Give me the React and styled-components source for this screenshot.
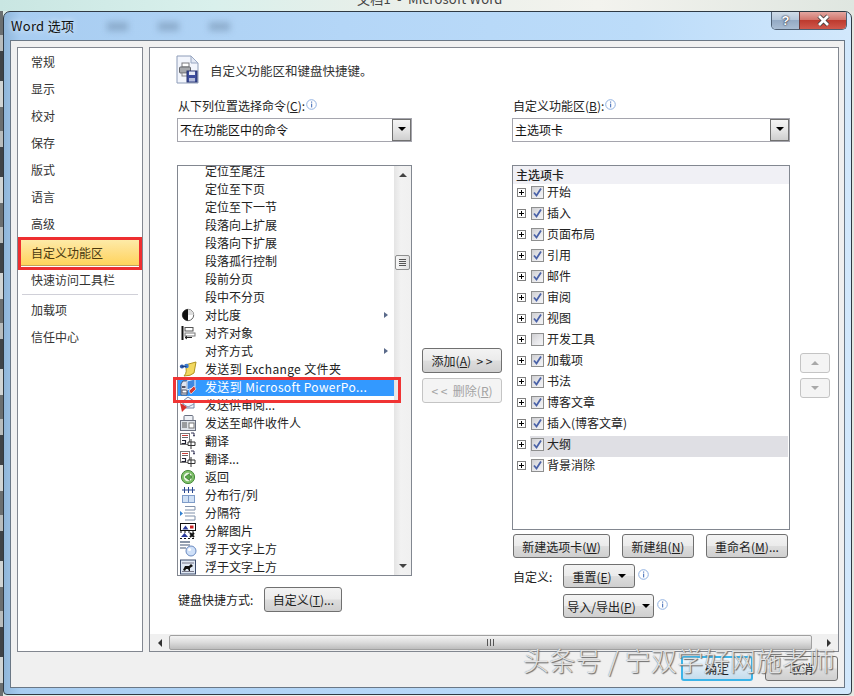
import React from 'react';
import styled, { createGlobalStyle } from 'styled-components';

const Global = createGlobalStyle`
  html, body { margin: 0; padding: 0; background: #e8eeee; }
  * { box-sizing: border-box; }
  body { font-family: "Noto Sans CJK SC", "Liberation Sans", sans-serif; font-size: 12px; color: #1e1e1e; }
`;

const FONT = `"Noto Sans CJK SC", "Liberation Sans", sans-serif`;

const Screen = styled.div`
  position: relative; width: 854px; height: 696px; overflow: hidden;
  display: flex; flex-direction: column;
  background: linear-gradient(90deg, #dfeee9, #eef3ef 40%, #e4e7e2);
`;
const TopStrip = styled.div`
  height: 11px; flex: none; overflow: hidden; padding-left: 357px;
  background: linear-gradient(90deg, #c9e6e2 0, #d9f0ec 25%, #e9efe9 45%, #f3f3ee 70%, #dfe6e0 100%);
`;
const Caption = styled.div`
  margin-top: -10px; font-size: 13px; line-height: 18px; color: #444; letter-spacing: .2px; white-space: pre;
`;
const Stage = styled.div`flex: 1; display: flex; min-height: 0;`;
const LeftEdge = styled.div`
  width: 3px; flex: none;
  background: repeating-linear-gradient(180deg, #6b6f70 0 24px, #b8bcbc 24px 40px, #3f4347 40px 70px, #d0d4d4 70px 96px);
`;
const Win = styled.div`
  width: 849px; height: 684px; flex: none; border: 1px solid #2f3a44; border-radius: 7px 7px 4px 4px;
  padding: 0 6px 6px 6px; display: flex; flex-direction: column; overflow: hidden;
  background: linear-gradient(90deg, #8fb6da 0, #a8cdf1 2%, #b4d6f7 40%, #bcdcf9 75%, #d2e8fc 100%);
`;
const TitleBar = styled.div`height: 28px; flex: none; display: flex; align-items: flex-start; position: relative;`;
const TitleText = styled.div`
  margin: 5px 0 0 1px; font-size: 13px; line-height: 18px; color: #111; letter-spacing: .3px;
  text-shadow: 0 0 6px rgba(255,255,255,.9);
`;
const Blobs = styled.div`display: flex; gap: 30px; margin: 10px 0 0 33px;`;
const Blob = styled.div`width: 21px; height: 9px; background: rgba(90,115,145,.38); filter: blur(3px);`;
const Caps = styled.div`
  margin-left: auto; margin-right: -2px; margin-top: -1px; display: flex; height: 19px;
  border: 1px solid #4d5f72; border-top: none; border-radius: 0 0 5px 5px; overflow: hidden;
`;
const HelpCap = styled.div`
  width: 27px; display: flex; align-items: center; justify-content: center;
  font: bold 13px "Liberation Sans", sans-serif; color: #fff; text-shadow: 0 0 2px #223, 0 0 1px #223;
  background: linear-gradient(180deg, #d3dfea, #b5c7da 48%, #93aac4 52%, #a9bdd3);
`;
const CloseCap = styled.div`
  width: 47px; display: flex; align-items: center; justify-content: center; border-left: 1px solid #6e3a3a;
  background: linear-gradient(180deg, #e5aca6, #d2776e 48%, #bd3a2e 52%, #d0584c);
`;
const Client = styled.div`
  flex: 1; min-height: 0; border: 1px solid #6a7785; background: #f0f0f0;
  padding: 6px 6px 0 6px; display: flex; flex-direction: column;
`;
const Main = styled.div`height: 605px; flex: none; display: flex; gap: 6px;`;
const Nav = styled.div`
  width: 126px; flex: none; background: #fff; border: 1px solid #828790;
`;
const NavItem = styled.div`
  position: relative; height: ${p => p.$tall ? 29 : 27}px; display: flex; align-items: center; padding-left: 13px;
  font-size: 12px; color: #333;
  ${p => p.$active && `
    padding-top: 2px; color: #4a3a10;
    background: linear-gradient(180deg, #fdeeb0, #fee08a 45%, #ffd35a);
    box-shadow: inset 0 0 0 1px #c2a25a;
    &::after { content: ''; position: absolute; left: 0; right: 0; top: 0; bottom: -4px; border: 3px solid #ee2e30; }
  `}
`;
const NavSep = styled.div`height: 1px; background: #d0d0d8; margin: 1px 4px 1px 4px;`;

const Panel = styled.div`
  width: 690px; flex: none; background: #fff; border: 1px solid #828790; display: flex; flex-direction: column;
`;
const PanelBody = styled.div`flex: 1; min-height: 0; padding-left: 27px;`;
const HeadRow = styled.div`
  height: 49px; display: flex; align-items: flex-start; padding: 7px 0 0 0; margin-left: -1px;
`;
const HeadText = styled.div`
  margin: 7px 0 0 11px; font-size: 12.5px; line-height: 18px; color: #333;
`;
const Columns = styled.div`display: flex; align-items: flex-start;`;
const LeftCol = styled.div`width: 235px; flex: none; display: flex; flex-direction: column;`;
const MidCol = styled.div`width: 100px; flex: none; display: flex; flex-direction: column; align-items: center; padding-top: 251px; gap: 5px;`;
const RightCol = styled.div`width: 278px; flex: none; display: flex; flex-direction: column;`;
const SideCol = styled.div`margin-left: 10px; padding-top: 256px; display: flex; flex-direction: column; gap: 5px;`;
const Label = styled.div`
  height: 18px; display: flex; align-items: center; gap: 1px; font-size: 12px; line-height: 18px; color: #222;
  padding-left: 1px;
`;
const Ak = styled.span`text-decoration: underline; text-underline-offset: 1px;`;
const Select = styled.div`
  margin-top: 3px; height: 24px; border: 1px solid #a5a5ad; background: #fff; display: flex; align-items: center;
  justify-content: space-between; font-size: 12px; padding-left: 2px; color: #111;
`;
const SelectText = styled.span`margin-top: -2px;`;
const SelectBtn = styled.div`
  width: 19px; height: 22px; border: 1px solid #707070; background: linear-gradient(180deg, #f4f4f4, #e6e6e6 50%, #cfcfcf);
  display: flex; align-items: center; justify-content: center; padding-bottom: 3px;
`;
const Caret = styled.i`
  width: 0; height: 0; border-left: 4px solid transparent; border-right: 4px solid transparent; border-top: 4px solid ${p => p.$c || '#000'};
  ${p => p.$gap && `margin-left: ${p.$gap}px;`}
`;
const ListBox = styled.div`
  position: relative; margin-top: 23px; height: 411px; border: 1px solid #828790; display: flex; background: #fff;
`;
const RowsClip = styled.div`flex: 1; min-width: 0; overflow: hidden;`;
const Rows = styled.div`margin-top: -4px;`;
const CmdRow = styled.div`
  height: 18px; display: flex; align-items: center; font-size: 12px; color: ${p => p.$sel ? '#fff' : '#222'};
  background: ${p => p.$sel ? '#3399ff' : 'transparent'}; white-space: pre;
`;
const CmdIcon = styled.div`width: 20px; height: 18px; flex: none; display: flex; align-items: center; justify-content: center; margin-right: 7px; margin-left: 0;`;
const CmdText = styled.span`flex: 1; margin-top: -2px; letter-spacing: ${p => p.$wide ? '.36px' : '0'};`;
const SubArrow = styled.i`
  width: 0; height: 0; margin-right: 6px; border-top: 3.5px solid transparent; border-bottom: 3.5px solid transparent; border-left: 4px solid #5a6a8a;
`;
const VScroll = styled.div`
  width: 17px; flex: none; background: linear-gradient(90deg, #e4e4e4, #f2f2f2 40%, #f0f0f0); display: flex; flex-direction: column; align-items: center;
`;
const ArrowUp = styled.i`
  margin-top: 7px; width: 0; height: 0; border-left: 4px solid transparent; border-right: 4px solid transparent; border-bottom: 4px solid ${p => p.$c || '#444'};
`;
const ArrowDown = styled.i`
  margin-top: auto; margin-bottom: 7px; width: 0; height: 0; border-left: 4px solid transparent; border-right: 4px solid transparent; border-top: 4px solid ${p => p.$c || '#444'};
`;
const Thumb = styled.div`
  margin-top: 78px; width: 15px; height: 15px; border: 1px solid #8e8f8f; border-radius: 2px;
  background: linear-gradient(90deg, #f6f6f6, #e2e2e2); display: flex; flex-direction: column; align-items: center; justify-content: center; gap: 1px;
`;
const Grip = styled.i`width: 7px; height: 1px; background: #555;`;
const ShortcutRow = styled.div`margin-top: 11px; display: flex; align-items: center; gap: 11px; font-size: 12px; padding-left: 1px; color: #222;`;
const Btn = styled.div`
  height: ${p => p.$h || 24}px; width: ${p => p.$w}px; flex: none; display: flex; align-items: center; justify-content: center;
  border: 1px solid ${p => p.$off ? '#c4c4c4' : '#707070'}; border-radius: 3px; font-size: 12px; white-space: pre;
  color: ${p => p.$off ? '#a3a3a3' : '#222'};
  background: ${p => p.$off ? '#f4f4f4' : 'linear-gradient(180deg, #f3f3f3, #ebebeb 48%, #dddddd 52%, #cfcfcf)'};
`;
const TreeBox = styled.div`height: 365px; margin-top: 23px; border: 1px solid #828790; background: #fff; overflow: hidden;`;
const TreeHead = styled.div`height: 18px; background: #f0f0f5; padding-left: 3px; font-size: 12px; line-height: 17px; color: #222; font-weight: 500;`;
const TreeRow = styled.div`height: 21px; display: flex;`;
const Expander = styled.div`
  position: relative; flex: none; width: 9px; height: 9px; margin: 4px 4px 0 4px; border: 1px solid #808080; background: #fff;
  &::before { content: ''; position: absolute; left: 1px; right: 1px; top: 3px; height: 1px; background: #000; }
  &::after { content: ''; position: absolute; top: 1px; bottom: 1px; left: 3px; width: 1px; background: #000; }
`;
const TreeLabel = styled.div`
  flex: 1; margin-right: 1px; display: flex; align-items: flex-start; gap: 3px; padding-left: 1px; font-size: 12px; line-height: 16px; color: #222;
  background: ${p => p.$sel ? '#dfdfe4' : 'transparent'};
`;
const Check = styled.div`
  width: 13px; height: 13px; flex: none; margin-top: 2px; border: 1px solid #8e8f8f; display: flex; align-items: center; justify-content: center;
  background: linear-gradient(135deg, #cfcfd2, #e9e9ec 60%, #f4f4f6);
`;
const BtnRow = styled.div`margin-top: ${p => p.$mt}px; display: flex; align-items: center;`;
const Spacer = styled.div`width: ${p => p.$w}px; flex: none; font-size: 12px; color: #222; padding-left: 1px;`;
const HScroll = styled.div`
  height: 17px; flex: none; display: flex; align-items: center; background: #f0f0f0; margin-bottom: 0;
`;
const HArrow = styled.div`width: 19px; flex: none; display: flex; justify-content: center;`;
const LeftTri = styled.i`width: 0; height: 0; border-top: 4px solid transparent; border-bottom: 4px solid transparent; border-right: 4px solid #333;`;
const RightTri = styled.i`width: 0; height: 0; border-top: 4px solid transparent; border-bottom: 4px solid transparent; border-left: 4px solid #333;`;
const HThumb = styled.div`
  width: 643px; height: 15px; flex: none; border: 1px solid #a0a0a0; border-radius: 2px; display: flex; align-items: center; justify-content: center; gap: 2px;
  background: linear-gradient(180deg, #f3f3f3, #dcdcdc 50%, #bdbdbd);
`;
const VGrip = styled.i`width: 1px; height: 7px; background: #555;`;
const Footer = styled.div`flex: 1; display: flex; justify-content: flex-end; gap: 12px; padding-top: 4px; padding-right: 0; align-items: flex-start;`;
const DefaultBtn = styled(Btn)`
  border: 2px solid #3cb4e8; color: #222; background: linear-gradient(180deg, #f0f8fd, #dbeaf5 50%, #c5dcec);
`;
const Watermark = styled.div`
  position: absolute; left: 523px; top: 642px; font-family: ${FONT}; font-size: 26px; line-height: 36px; white-space: pre;
  color: rgba(255,255,255,.78); font-weight: 300; letter-spacing: .3px;
  text-shadow: 1px 1px 1px #666, 0 0 1px #777;
`;

const RedBox = styled.div`
  position: absolute; left: -5px; top: 211px; width: 228px; height: 26px; border: 3px solid #f03434; pointer-events: none;
`;

const Info = ({ m = 0 }) => (
  <svg width="11" height="11" viewBox="0 0 11 11" style={{ flex: 'none', marginLeft: m, marginBottom: 3 }}>
    <circle cx="5.5" cy="5.5" r="4.8" fill="#fff" stroke="#8fb0e0" />
    <rect x="5" y="2.5" width="1.2" height="1.2" fill="#5a7fc0" />
    <rect x="5" y="4.6" width="1.2" height="3.8" fill="#5a7fc0" />
  </svg>
);

const X = () => (
  <svg width="15" height="13" viewBox="0 0 15 13">
    <path d="M3 2 L12 11 M12 2 L3 11" stroke="#3a3a3a" strokeWidth="4.4" />
    <path d="M3 2 L12 11 M12 2 L3 11" stroke="#fff" strokeWidth="2.8" />
  </svg>
);

const Tick = () => (
  <svg width="11" height="11" viewBox="0 0 11 11">
    <path d="M2 5.5 L4.5 8.5 L9 1.5" fill="none" stroke="#4a62a8" strokeWidth="1.8" />
  </svg>
);

const HeadIcon = () => (
  <svg width="23" height="30" viewBox="0 0 23 30" style={{ flex: 'none' }}>
    <path d="M1 1 H15 L22 8 V28 H1 Z" fill="#f2f5fc" stroke="#8d9cb8" />
    <path d="M15 1 V8 H22 Z" fill="#e2e8f4" stroke="#9aa8c2" />
    <rect x="6" y="8" width="7" height="4" fill="#fff" stroke="#7a7a7e" />
    <rect x="3.5" y="12" width="11" height="6" rx="1" fill="#a6a8ac" stroke="#66686c" />
    <rect x="6" y="18" width="6" height="3" fill="#f4f4f4" stroke="#8a8a8e" />
    <rect x="11" y="16" width="10" height="11" fill="#3c4c9c" stroke="#28346e" />
    <rect x="13" y="16.5" width="6" height="3.5" fill="#e6eaf6" />
    <rect x="13" y="23" width="6" height="3.5" fill="#b4bcdc" />
  </svg>
);

const Ico = ({ children }) => <svg width="18" height="18" viewBox="0 0 18 18">{children}</svg>;
const TranslateIcon = () => (
  <Ico>
    <rect x="1.5" y="1.5" width="9" height="11" fill="#fff" stroke="#777" />
    <path d="M3 3.5 H9" stroke="#c9403a" /><path d="M3 5.5 H9" stroke="#666" />
    <path d="M2.5 11.5 H6.5 V8.5 H3" fill="none" stroke="#223" strokeWidth="1.2" />
    <path d="M12 7 V17 M9 10 H16 V13.5 H9 Z" fill="#fff" stroke="#333" />
    <path d="M12 1 H15 V4" fill="none" stroke="#335" /><path d="M14 3 L16 3 L15 5 Z" fill="#335" />
  </Ico>
);
const icons = {
  contrast: <Ico><circle cx="9" cy="9" r="5.7" fill="#fff" stroke="#666" /><path d="M9 3.3 A5.7 5.7 0 0 0 9 14.7 Z" fill="#111" /><path d="M9 3.3 A5.7 5.7 0 0 1 14.7 9 L9 9 Z" fill="#ddd" /></Ico>,
  alignObj: <Ico><path d="M3.5 2 V16" stroke="#111" strokeWidth="2" /><rect x="6" y="3.5" width="8" height="3.5" fill="#fff" stroke="#555" /><rect x="6" y="9" width="10" height="3" fill="#fff" stroke="#777" /><path d="M6 13.5 H13 M6 13.5 L8 12 M6 13.5 L8 15" fill="none" stroke="#222" /></Ico>,
  exchange: <Ico><path d="M6 5 L17 2 L15 13 Q12 16 5 16 Q9 12 6 5 Z" fill="#f2d860" stroke="#b09420" /><circle cx="3" cy="6.5" r="2.1" fill="#2a58aa" /><circle cx="7.5" cy="6" r="2.3" fill="#3b7ad0" /><path d="M3 6.5 H7.5" stroke="#1c3c80" /></Ico>,
  ppt: <Ico><path d="M2 6 L4 3 H8 V17 H2 Z" fill="#dfe6f2" stroke="#4a5a78" /><rect x="3" y="8" width="3.5" height="2" fill="#556" /><rect x="3" y="12" width="5" height="3" fill="#fff" stroke="#556" /><path d="M8 3 L16 1 V9 L8 12 Z" fill="#3f88e0" stroke="#e8f2fc" /><path d="M10 13 L15 8 L17 11 L12 16 Z" fill="#d83a30" stroke="#fff" strokeWidth=".6" /></Ico>,
  review: <Ico><path d="M4 5 L9 1 L15 5 V12 H4 Z" fill="#f2f5fa" stroke="#7585a4" /><path d="M4 8 L9 11 L15 8" fill="none" stroke="#8494b2" /><path d="M1 7 L8 11 L5 14 L3 16 Z" fill="#d8302a" /></Ico>,
  mail: <Ico><rect x="5" y="1.5" width="9" height="6" rx="1" fill="#eef1f6" stroke="#6a7080" /><rect x="1.5" y="6.5" width="15" height="10" fill="#dfe3ea" stroke="#6a7080" /><path d="M3 9 H8 M3 11 H8 M3 13 H8" stroke="#555" /><rect x="10" y="9" width="5" height="5" fill="#fff" stroke="#777" /></Ico>,
  translate: <TranslateIcon />,
  back: <Ico><circle cx="9" cy="9" r="6.6" fill="#7cc067" stroke="#4a8a3e" /><circle cx="9" cy="9" r="4.2" fill="#eaf5e2" /><path d="M10.5 5.6 L6 9 L10.5 12.4 V10.3 H12.5 V7.7 H10.5 Z" fill="#5aa94a" stroke="#2c6a22" strokeWidth=".6" /></Ico>,
  table: <Ico><path d="M3 4 H16 M5.5 1 V7 M9.5 1 V7 M13.5 1 V7" stroke="#2a4890" /><rect x="3.5" y="9.5" width="6" height="7" fill="#cfe0f5" stroke="#7f9cc8" /><rect x="9.5" y="9.5" width="6" height="7" fill="#cfe0f5" stroke="#7f9cc8" /></Ico>,
  breaks: <Ico><path d="M1 7 L4 9.5 L1 12 Z" fill="#2f7fd0" /><path d="M6 2.5 H16 V6 H6" fill="#fff" stroke="#7f90aa" /><path d="M5 9 H16" stroke="#7f90aa" /><path d="M6 12 H16 V16 H6" fill="#fff" stroke="#7f90aa" /></Ico>,
  split: <Ico><rect x="1.5" y="1.5" width="15" height="7" fill="#fff" stroke="#111" /><path d="M3.5 7.5 L6.5 3.5 L9.5 7.5 Z" fill="#2a3a9a" /><rect x="11" y="3.5" width="3.5" height="3" fill="#c22" /><path d="M2 15 L5.5 11 L9 15 Z" fill="#2a3a9a" /><path d="M1 10 H17 M1 16.5 H17" stroke="#111" strokeDasharray="2 2" /><path d="M11 11 L15 15 M15 11 L11 15" stroke="#111" strokeWidth="2" /></Ico>,
  floatA: <Ico><rect x="1" y="1" width="10" height="2" fill="#8a96a8" /><rect x="1" y="4" width="10" height="2" fill="#a0aaba" /><rect x="1" y="7" width="6" height="2" fill="#a0aaba" /><circle cx="12" cy="11" r="5" fill="#cfe0f8" stroke="#6a8ac0" /><circle cx="10.5" cy="9.5" r="1.6" fill="#fff" /></Ico>,
  floatB: <Ico><rect x="1.5" y="2" width="15" height="14" fill="#dfe8f4" stroke="#3a4a6a" /><path d="M3 5 H15 M3 13.5 H15" stroke="#778" /><path d="M4 12 L6 8 H10 L12 6 L14 8 L11 10 V13 H10 L9 11 H7 L6 13 Z" fill="#111" /></Ico>,
};

const cmds = [
  ['定位至尾注'], ['定位至下页'], ['定位至下一节'], ['段落向上扩展'], ['段落向下扩展'], ['段落孤行控制'], ['段前分页'], ['段中不分页'],
  ['对比度', 'contrast', true], ['对齐对象', 'alignObj'], ['对齐方式', null, true], ['发送到 Exchange 文件夹', 'exchange'],
  ['发送到 Microsoft PowerPo...', 'ppt', false, true], ['发送供审阅...', 'review'], ['发送至邮件收件人', 'mail'], ['翻译', 'translate'], ['翻译...', 'translate'],
  ['返回', 'back'], ['分布行/列', 'table'], ['分隔符', 'breaks'], ['分解图片', 'split'], ['浮于文字上方', 'floatA'], ['浮于文字上方', 'floatB'],
];
const tabs = [
  ['开始', 1], ['插入', 1], ['页面布局', 1], ['引用', 1], ['邮件', 1], ['审阅', 1], ['视图', 1], ['开发工具', 0], ['加载项', 1], ['书法', 1], ['博客文章', 1], ['插入(博客文章)', 1], ['大纲', 1, true], ['背景消除', 1],
];
const navA = ['常规', '显示', '校对', '保存', '版式', '语言', '高级'];

export default function App() {
  return (
    <Screen>
      <Global />
      <TopStrip><Caption>文档1  -  Microsoft Word</Caption></TopStrip>
      <Stage>
        <LeftEdge />
        <Win>
          <TitleBar>
            <TitleText>Word 选项</TitleText>
            <Blobs><Blob /><Blob /><Blob /></Blobs>
            <Caps>
              <HelpCap>?</HelpCap>
              <CloseCap><X /></CloseCap>
            </Caps>
          </TitleBar>
          <Client>
            <Main>
              <Nav>
                {navA.map(t => <NavItem key={t}>{t}</NavItem>)}
                <NavItem $active $tall>自定义功能区</NavItem>
                <NavItem>快速访问工具栏</NavItem>
                <NavSep />
                <NavItem>加载项</NavItem>
                <NavItem>信任中心</NavItem>
              </Nav>
              <Panel>
                <PanelBody>
                  <HeadRow>
                    <HeadIcon />
                    <HeadText>自定义功能区和键盘快捷键。</HeadText>
                  </HeadRow>
                  <Columns>
                    <LeftCol>
                      <Label><span>从下列位置选择命令(<Ak>C</Ak>):</span><Info /></Label>
                      <Select><SelectText>不在功能区中的命令</SelectText><SelectBtn><Caret /></SelectBtn></Select>
                      <ListBox>
                        <RowsClip>
                          <Rows>
                            {cmds.map(([t, ic, sub, sel], i) => (
                              <CmdRow key={i} $sel={sel}>
                                <CmdIcon>{ic ? icons[ic] : null}</CmdIcon>
                                <CmdText $wide={/[A-Za-z]/.test(t)}>{t}</CmdText>
                                {sub ? <SubArrow /> : null}
                              </CmdRow>
                            ))}
                          </Rows>
                        </RowsClip>
                        <VScroll>
                          <ArrowUp />
                          <Thumb><Grip /><Grip /><Grip /><Grip /></Thumb>
                          <ArrowDown />
                        </VScroll>
                        <RedBox />
                      </ListBox>
                      <ShortcutRow>键盘快捷方式:<Btn $w={78} $h={25}>自定义(<Ak>T</Ak>)...</Btn></ShortcutRow>
                    </LeftCol>
                    <MidCol>
                      <Btn $w={80} $h={25}>添加(<Ak>A</Ak>)  {'> >'}</Btn>
                      <Btn $w={80} $h={25} $off>{'< <'}  删除(<Ak>R</Ak>)</Btn>
                    </MidCol>
                    <RightCol>
                      <Label><span>自定义功能区(<Ak>B</Ak>):</span><Info /></Label>
                      <Select><SelectText>主选项卡</SelectText><SelectBtn><Caret /></SelectBtn></Select>
                      <TreeBox>
                        <TreeHead>主选项卡</TreeHead>
                        {tabs.map(([t, on, sel]) => (
                          <TreeRow key={t}>
                            <Expander />
                            <TreeLabel $sel={sel}>
                              <Check>{on ? <Tick /> : null}</Check>
                              {t}
                            </TreeLabel>
                          </TreeRow>
                        ))}
                      </TreeBox>
                      <BtnRow $mt={4}>
                        <Btn $w={97} style={{ marginLeft: 1 }}>新建选项卡(<Ak>W</Ak>)</Btn>
                        <Spacer $w={12} />
                        <Btn $w={72}>新建组(<Ak>N</Ak>)</Btn>
                        <Spacer $w={12} />
                        <Btn $w={82}>重命名(<Ak>M</Ak>)...</Btn>
                      </BtnRow>
                      <BtnRow $mt={6}>
                        <Spacer $w={51}>自定义:</Spacer>
                        <Btn $w={72}>重置(<Ak>E</Ak>)<Caret $gap={6} /></Btn>
                        <Info m={3} />
                      </BtnRow>
                      <BtnRow $mt={6}>
                        <Spacer $w={51} />
                        <Btn $w={91}>导入/导出(<Ak>P</Ak>)<Caret $gap={6} /></Btn>
                        <Info m={3} />
                      </BtnRow>
                    </RightCol>
                    <SideCol>
                      <Btn $w={30} $h={20} $off><ArrowUp $c="#a8a8a8" style={{ marginTop: 0 }} /></Btn>
                      <Btn $w={30} $h={20} $off><ArrowDown $c="#a8a8a8" style={{ margin: 0 }} /></Btn>
                    </SideCol>
                  </Columns>
                </PanelBody>
                <HScroll>
                  <HArrow><LeftTri /></HArrow>
                  <HThumb><VGrip /><VGrip /><VGrip /></HThumb>
                  <HArrow style={{ marginLeft: 'auto' }}><RightTri /></HArrow>
                </HScroll>
              </Panel>
            </Main>
            <Footer>
              <DefaultBtn $w={72} $h={25}>确定</DefaultBtn>
              <Btn $w={73} $h={25}>取消</Btn>
            </Footer>
          </Client>
        </Win>
      </Stage>
      <Watermark>头条号 / 宁双学好网施老师</Watermark>
    </Screen>
  );
}
